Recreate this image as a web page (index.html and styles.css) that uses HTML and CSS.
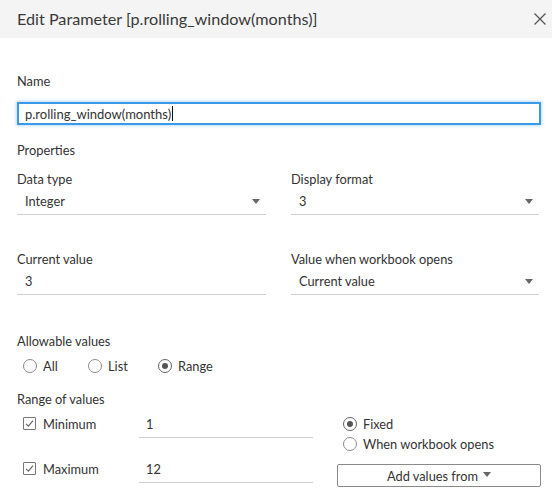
FILE: index.html
```html
<!DOCTYPE html>
<html>
<head>
<meta charset="utf-8">
<link rel="stylesheet" href="styles.css">
</head>
<body>
<div class="dialog">
  <div class="header">
    <div class="title">Edit Parameter [p.rolling_window(months)]</div>
    <svg class="close" width="12" height="12" viewBox="0 0 12 12"><path d="M0.5 0.5 L11.5 11.5 M11.5 0.5 L0.5 11.5" stroke="#555" stroke-width="1.3" fill="none"/></svg>
  </div>
  <div class="content">
    <div class="label name-label">Name</div>
    <div class="name-input"><span>p.rolling_window(months)</span><span class="caret"></span></div>

    <div class="label section">Properties</div>
    <div class="grid">
      <div class="field">
        <div class="label">Data type</div>
        <div class="control"><span>Integer</span><span class="arrow"></span></div>
      </div>
      <div class="field">
        <div class="label">Display format</div>
        <div class="control"><span>3</span><span class="arrow"></span></div>
      </div>
      <div class="field">
        <div class="label">Current value</div>
        <div class="control"><span>3</span></div>
      </div>
      <div class="field">
        <div class="label">Value when workbook opens</div>
        <div class="control"><span>Current value</span><span class="arrow"></span></div>
      </div>
    </div>

    <div class="label allow">Allowable values</div>
    <div class="radios">
      <div class="opt opt-all"><span class="radio"></span>All</div>
      <div class="opt opt-list"><span class="radio"></span>List</div>
      <div class="opt"><span class="radio checked"></span>Range</div>
    </div>

    <div class="label rangelabel">Range of values</div>
    <div class="range">
      <div class="limits">
        <div class="limit">
          <div class="chk"><span class="checkbox"><svg width="11" height="11" viewBox="0 0 11 11"><path d="M2 5.8 L4.4 8.2 L9 2.6" stroke="#666" stroke-width="1.2" fill="none"/></svg></span>Minimum</div>
          <div class="numinput">1</div>
        </div>
        <div class="limit">
          <div class="chk"><span class="checkbox"><svg width="11" height="11" viewBox="0 0 11 11"><path d="M2 5.8 L4.4 8.2 L9 2.6" stroke="#666" stroke-width="1.2" fill="none"/></svg></span>Maximum</div>
          <div class="numinput">12</div>
        </div>
      </div>
      <div class="side">
        <div class="opt"><span class="radio checked"></span>Fixed</div>
        <div class="opt"><span class="radio"></span>When workbook opens</div>
        <div class="addbtn">Add values from <span class="arrow btnarrow"></span></div>
      </div>
    </div>
  </div>
</div>
</body>
</html>
```

FILE: styles.css
```css
* { box-sizing: border-box; }
html, body { margin: 0; padding: 0; background: #fff; }
body {
  font-family: Lato, "Open Sans", sans-serif;
  font-size: 12.8px;
  color: #333;
  width: 552px;
  height: 495px;
  overflow: hidden;
}
.header {
  height: 38px;
  background: #f4f4f4;
  display: flex;
  align-items: center;
  justify-content: space-between;
  padding: 0 6px 0 17px;
}
.title {
  font-size: 16.2px;
  color: #3a3a3a;
  line-height: 20px;
  padding-bottom: 1px;
}
.close { display: block; margin-top: -1px; }
.content {
  padding: 0 11px 0 17px;
}
.label { line-height: 16px; color: #333; }
.name-label { margin-top: 35px; }
.name-input {
  margin-top: 13px;
  height: 23px;
  width: 524px;
  border: 2px solid #3b9ae8;
  box-shadow: 0 0 3px 1px rgba(59,154,232,0.35);
  display: flex;
  align-items: center;
  padding-left: 6px;
  font-size: 13px;
}
.caret {
  display: inline-block;
  width: 1px;
  height: 15px;
  background: #111;
  margin-left: 1px;
}
.section { margin-top: 17px; }
.grid {
  margin-top: 13px;
  display: grid;
  grid-template-columns: 249px 248px;
  column-gap: 25px;
  row-gap: 36px;
}
.control {
  height: 28px;
  border-bottom: 1px solid #cfcfcf;
  display: flex;
  align-items: center;
  justify-content: space-between;
  padding: 0 6px 0 8px;
}
.arrow {
  width: 0; height: 0;
  border-left: 4px solid transparent;
  border-right: 4px solid transparent;
  border-top: 5px solid #666;
  margin-top: 2px;
}
.btnarrow {
  display: inline-block;
  margin: 0 0 2px 5px;
  vertical-align: middle;
}
.allow { margin-top: 38px; }
.radios {
  margin-top: 9px;
  display: flex;
  padding-left: 6px;
}
.opt {
  display: flex;
  align-items: center;
  line-height: 16px;
}
.radio {
  width: 14px; height: 14px;
  border: 1px solid #8c8c8c;
  border-radius: 50%;
  margin-right: 6px;
  position: relative;
  flex: none;
}
.radio.checked { border-color: #666; }
.radio.checked::after {
  content: "";
  position: absolute;
  left: 3px; top: 3px;
  width: 6px; height: 6px;
  border-radius: 50%;
  background: #555;
}
.opt-all { width: 65px; }
.opt-list { width: 70px; }
.rangelabel { margin-top: 17px; }
.range {
  display: flex;
  margin-top: 3px;
}
.limits {
  width: 296px;
  display: flex;
  flex-direction: column;
  gap: 17px;
}
.limit {
  display: flex;
  height: 28px;
}
.chk {
  width: 122px;
  display: flex;
  align-items: center;
  padding-left: 6px;
  padding-bottom: 1px;
}
.checkbox {
  width: 13px; height: 13px;
  border: 1px solid #777;
  border-radius: 1px;
  margin-right: 7px;
  display: flex;
  align-items: center;
  justify-content: center;
}
.checkbox svg { display: block; }
.numinput {
  flex: 1;
  border-bottom: 1px solid #cfcfcf;
  padding: 6px 0 0 7px;
  line-height: 16px;
}
.side {
  margin-left: 24px;
  padding-top: 6px;
  padding-left: 6px;
  display: flex;
  flex-direction: column;
  gap: 4px;
}
.addbtn {
  margin-top: 8px;
  margin-left: -6px;
  width: 204px;
  height: 23px;
  border: 1px solid #8a8a8a;
  border-radius: 2px;
  display: flex;
  align-items: center;
  justify-content: center;
  line-height: 16px;
}
```
